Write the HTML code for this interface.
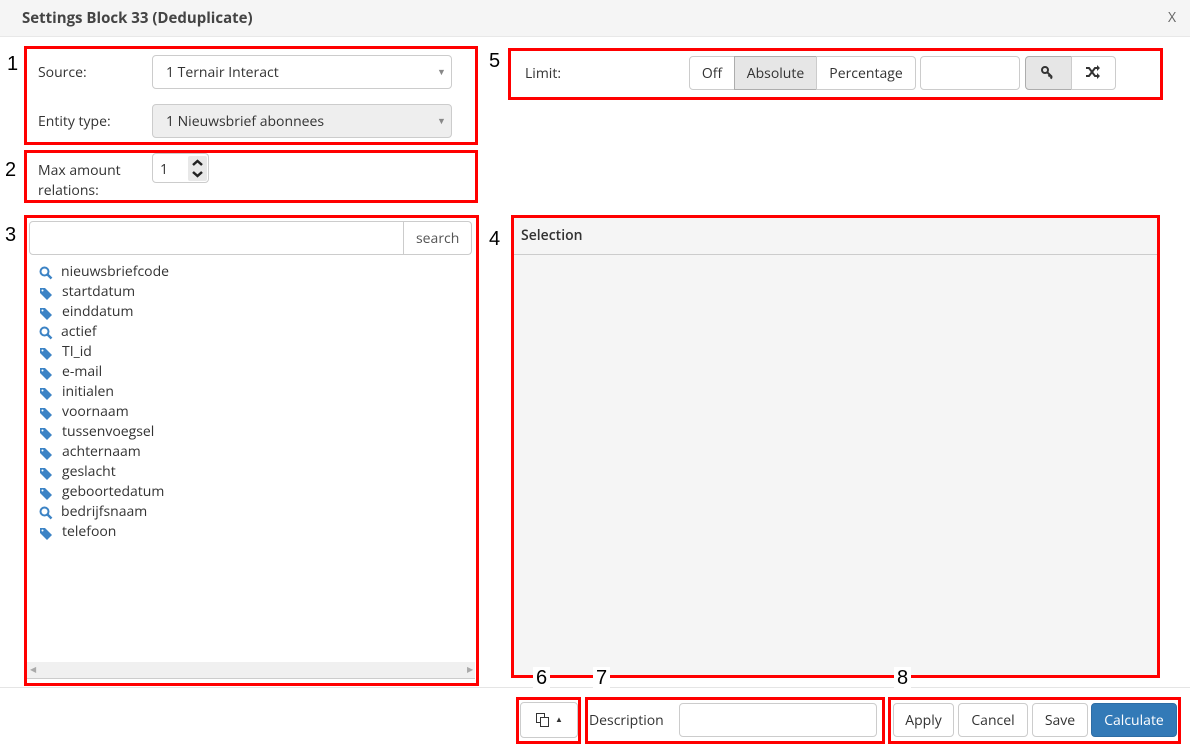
<!DOCTYPE html>
<html><head><meta charset="utf-8"><style>
*{box-sizing:border-box;margin:0;padding:0}
body{width:1190px;height:750px;position:relative;background:#fff;font-family:"Open Sans","Liberation Sans",sans-serif;font-size:14px;color:#333;overflow:hidden}
.a{position:absolute}
.red{position:absolute;border:3px solid #f00}
.num{position:absolute;font-family:"Liberation Sans",Arial,sans-serif;font-size:20px;color:#000;background:#fff;line-height:22px;padding:0 3px}
.inp{position:absolute;border:1px solid #ccc;border-radius:4px;background:#fff}
.btn{position:absolute;border:1px solid #ccc;background:#fff;text-align:center;color:#333;font-size:14px}
.li{position:absolute;left:39px;height:20px;line-height:20px;font-size:14px;color:#333}
.li svg{position:absolute;left:0;top:4px}
.li span{position:absolute;left:22px;white-space:nowrap}
</style></head><body>
<div class="a" style="left:0;top:0;width:1190px;height:37px;background:#f5f5f5;border-bottom:1px solid #e8e8e8"></div>
<div class="a" style="left:22px;top:8px;font-size:15px;font-weight:bold;color:#444">Settings Block 33 (Deduplicate)</div>
<div class="a" style="left:1168px;top:8px;font-size:14px;color:#666">X</div>

<div class="red" style="left:24px;top:46px;width:454px;height:99px"></div>
<div class="a" style="left:38px;top:63px">Source:</div>
<div class="inp" style="left:152px;top:55px;width:300px;height:34px"></div>
<div class="a" style="left:166px;top:63px">1 Ternair Interact</div>
<div class="a" style="left:437px;top:65px;font-size:9px;color:#888">▼</div>
<div class="a" style="left:38px;top:112px">Entity type:</div>
<div class="inp" style="left:152px;top:104px;width:300px;height:34px;background:#eee"></div>
<div class="a" style="left:166px;top:112px">1 Nieuwsbrief abonnees</div>
<div class="a" style="left:437px;top:114px;font-size:9px;color:#888">▼</div>
<div class="num" style="left:4px;top:53px">1</div>

<div class="red" style="left:24px;top:150px;width:454px;height:53px"></div>
<div class="a" style="left:38px;top:161px;line-height:20px">Max amount<br>relations:</div>
<div class="inp" style="left:152px;top:153px;width:57px;height:30px"></div>
<div class="a" style="left:160px;top:160px">1</div>
<div class="a" style="left:188px;top:156px;width:19px;height:25px;background:#e8e8e8;border-radius:2px"></div>
<svg class="a" style="left:190px;top:156px" width="15" height="25"><path d="M3 9l4.5-4 4.5 4M3 16l4.5 4 4.5-4" stroke="#222" stroke-width="2.5" fill="none"/></svg>
<div class="num" style="left:2px;top:159px">2</div>

<div class="red" style="left:24px;top:215px;width:455px;height:471px"></div>
<div class="inp" style="left:29px;top:221px;width:443px;height:34px"></div>
<div class="a" style="left:403px;top:222px;width:1px;height:32px;background:#ccc"></div>
<div class="a" style="left:416px;top:229px;color:#555">search</div>
<div class="a" style="left:27px;top:662px;width:448px;height:17px;background:#f0f0f0;border-bottom:1px solid #ccc"></div>
<div class="a" style="left:30px;top:664px;font-size:8px;color:#aaa">◀</div>
<div class="a" style="left:467px;top:664px;font-size:8px;color:#aaa">▶</div>
<div class="num" style="left:2px;top:224px">3</div>

<div id="list"></div>

<div class="red" style="left:508px;top:48px;width:655px;height:52px"></div>
<div class="a" style="left:525px;top:64px">Limit:</div>
<div class="btn" style="left:689px;top:56px;width:46px;height:34px;line-height:33px;border-radius:4px 0 0 4px">Off</div>
<div class="btn" style="left:734px;top:56px;width:83px;height:34px;line-height:33px;background:#e6e6e6;border-color:#adadad">Absolute</div>
<div class="btn" style="left:816px;top:56px;width:100px;height:34px;line-height:33px;border-radius:0 4px 4px 0">Percentage</div>
<div class="inp" style="left:920px;top:56px;width:100px;height:34px"></div>
<div class="btn" style="left:1025px;top:56px;width:47px;height:34px;background:#e6e6e6;border-color:#adadad;border-radius:4px 0 0 4px"></div>
<svg class="a" style="left:1040px;top:65px" width="16" height="16"><circle cx="5" cy="5" r="3" stroke="#333" stroke-width="2" fill="none"/><path d="M7 7l5 5M10 10l-1.5 1.5M12 12l-1.5 1.5" stroke="#333" stroke-width="2"/></svg>
<div class="btn" style="left:1071px;top:56px;width:45px;height:34px;border-radius:0 4px 4px 0"></div>
<svg class="a" style="left:1085px;top:65px" width="16" height="14"><path d="M1 3h3l6 8h3M1 11h3l6-8h3" stroke="#333" stroke-width="2" fill="none"/><path d="M12 0l3 3-3 3zM12 8l3 3-3 3z" fill="#333"/></svg>
<div class="num" style="left:486px;top:50px">5</div>

<div class="red" style="left:511px;top:215px;width:649px;height:463px"></div>
<div class="a" style="left:514px;top:218px;width:643px;height:457px;background:#f5f5f5"></div>
<div class="a" style="left:514px;top:254px;width:643px;height:1px;background:#ccc"></div>
<div class="a" style="left:521px;top:226px;font-size:14px;font-weight:600;color:#333">Selection</div>
<div class="num" style="left:486px;top:228px">4</div>

<div class="a" style="left:0;top:687px;width:1190px;height:1px;background:#e5e5e5"></div>
<div class="red" style="left:516px;top:697px;width:65px;height:47px"></div>
<div class="btn" style="left:520px;top:702px;width:58px;height:36px;border-radius:4px"></div>
<svg class="a" style="left:535px;top:712px" width="16" height="16"><rect x="1.5" y="1.5" width="8" height="9" fill="none" stroke="#333"/><rect x="5.5" y="5.5" width="8" height="9" fill="#fff" stroke="#333"/></svg>
<div class="a" style="left:555px;top:714px;font-size:8px;color:#333">▲</div>
<div class="red" style="left:585px;top:697px;width:300px;height:47px"></div>
<div class="a" style="left:589px;top:711px">Description</div>
<div class="inp" style="left:679px;top:703px;width:198px;height:34px"></div>
<div class="red" style="left:888px;top:697px;width:293px;height:47px"></div>
<div class="btn" style="left:893px;top:703px;width:61px;height:34px;line-height:33px;border-radius:4px">Apply</div>
<div class="btn" style="left:958px;top:703px;width:70px;height:34px;line-height:33px;border-radius:4px">Cancel</div>
<div class="btn" style="left:1032px;top:703px;width:56px;height:34px;line-height:33px;border-radius:4px">Save</div>
<div class="btn" style="left:1091px;top:703px;width:86px;height:34px;line-height:33px;border-radius:4px;background:#337ab7;border-color:#2e6da4;color:#fff">Calculate</div>
<div class="num" style="left:533px;top:667px">6</div>
<div class="num" style="left:593px;top:667px">7</div>
<div class="num" style="left:894px;top:667px">8</div>

<script>
var items=[["q","nieuwsbriefcode"],["t","startdatum"],["t","einddatum"],["q","actief"],["t","TI_id"],["t","e-mail"],["t","initialen"],["t","voornaam"],["t","tussenvoegsel"],["t","achternaam"],["t","geslacht"],["t","geboortedatum"],["q","bedrijfsnaam"],["t","telefoon"]];
var h="";
items.forEach(function(it,i){
var ic=it[0]=="q"?'<svg width="14" height="14"><circle cx="5.5" cy="5.5" r="4" stroke="#3c83c5" stroke-width="2" fill="none"/><path d="M8.5 8.5l4 4" stroke="#3c83c5" stroke-width="2.5"/></svg>':'<svg width="14" height="14" style="top:5px"><path d="M1 1h5l7 7-5 5-7-7z" fill="#3c83c5"/><circle cx="3.5" cy="3.5" r="1" fill="#fff"/></svg>';
h+='<div class="li" style="top:'+(262+i*20)+'px">'+ic+'<span'+(it[0]=="q"?'':' style="left:23px"')+'>'+it[1]+'</span></div>';
});
document.getElementById("list").innerHTML=h;
</script>
</body></html>
